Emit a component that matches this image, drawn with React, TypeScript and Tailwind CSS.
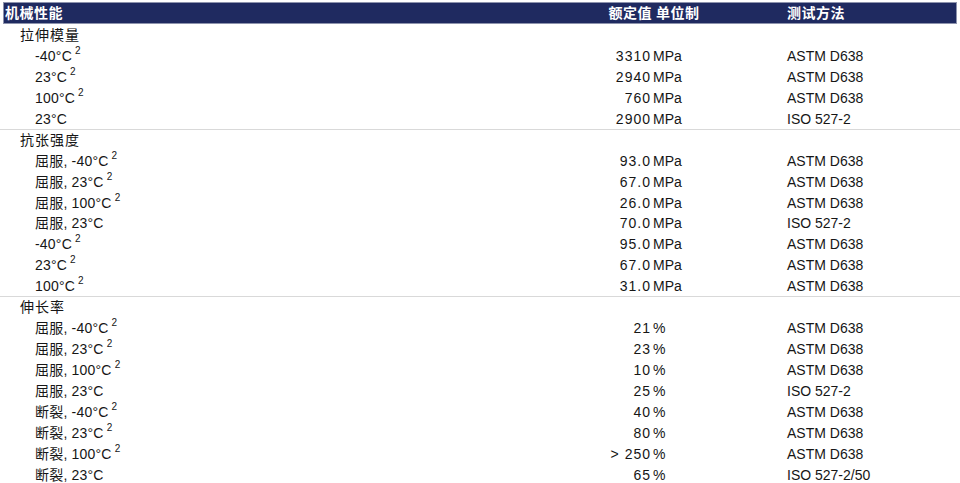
import React from "react";

type Row = { label: string; sup?: boolean; num: string; unit: string; method: string };
type Section = { title: string; rows: Row[]; h: string };

const sections: Section[] = [
  {
    title: "拉伸模量",
    h: "h-[21px]",
    rows: [
      { label: "-40°C", sup: true, num: "3310", unit: "MPa", method: "ASTM D638" },
      { label: "23°C", sup: true, num: "2940", unit: "MPa", method: "ASTM D638" },
      { label: "100°C", sup: true, num: "760", unit: "MPa", method: "ASTM D638" },
      { label: "23°C", num: "2900", unit: "MPa", method: "ISO 527-2" },
    ],
  },
  {
    title: "抗张强度",
    h: "h-[20.75px]",
    rows: [
      { label: "屈服, -40°C", sup: true, num: "93.0", unit: "MPa", method: "ASTM D638" },
      { label: "屈服, 23°C", sup: true, num: "67.0", unit: "MPa", method: "ASTM D638" },
      { label: "屈服, 100°C", sup: true, num: "26.0", unit: "MPa", method: "ASTM D638" },
      { label: "屈服, 23°C", num: "70.0", unit: "MPa", method: "ISO 527-2" },
      { label: "-40°C", sup: true, num: "95.0", unit: "MPa", method: "ASTM D638" },
      { label: "23°C", sup: true, num: "67.0", unit: "MPa", method: "ASTM D638" },
      { label: "100°C", sup: true, num: "31.0", unit: "MPa", method: "ASTM D638" },
    ],
  },
  {
    title: "伸长率",
    h: "h-[20.9px]",
    rows: [
      { label: "屈服, -40°C", sup: true, num: "21", unit: "%", method: "ASTM D638" },
      { label: "屈服, 23°C", sup: true, num: "23", unit: "%", method: "ASTM D638" },
      { label: "屈服, 100°C", sup: true, num: "10", unit: "%", method: "ASTM D638" },
      { label: "屈服, 23°C", num: "25", unit: "%", method: "ISO 527-2" },
      { label: "断裂, -40°C", sup: true, num: "40", unit: "%", method: "ASTM D638" },
      { label: "断裂, 23°C", sup: true, num: "80", unit: "%", method: "ASTM D638" },
      { label: "断裂, 100°C", sup: true, num: "> 250", unit: "%", method: "ASTM D638" },
      { label: "断裂, 23°C", num: "65", unit: "%", method: "ISO 527-2/50" },
    ],
  },
];

export default function App() {
  return (
    <div
      className="w-[960px] h-[483px] overflow-hidden bg-white text-[14px] text-[#161616] leading-none pt-[2px]"
      style={{ fontFamily: '"Liberation Sans", Arial, "Noto Sans CJK SC", sans-serif' }}
    >
      {/* header bar */}
      <div className="ml-[3px] w-[954px] h-[22px] border border-[#8d93ad] bg-[#1f2a60] flex items-center text-white font-bold">
        <div className="w-[556px] pl-[1px] tracking-[0.5px]">机械性能</div>
        <div className="w-[92px] text-right tracking-[0.5px]">额定值</div>
        <div className="w-[135px] pl-[4px] tracking-[0.5px]">单位制</div>
        <div className="tracking-[0.5px]">测试方法</div>
      </div>
      {sections.map((s, si) => (
        <div key={si} className={si < sections.length - 1 ? "border-b border-[#d9d9d9]" : ""}>
          <div className={`${s.h} flex items-center pl-[20px] tracking-[1px]`}>{s.title}</div>
          {s.rows.map((r, ri) => (
            <div key={ri} className={`${s.h} flex items-center`}>
              <div className="w-[560px] pl-[35px] flex items-start">
                <span className="tracking-[0.2px]">{r.label}</span>
                {r.sup && <span className="text-[10px] ml-[3px] -mt-[3px]">2</span>}
              </div>
              <div className="w-[91px] text-right tracking-[1px]">{r.num}</div>
              <div className="w-[136px] pl-[2px]">{r.unit}</div>
              <div>{r.method}</div>
            </div>
          ))}
        </div>
      ))}
    </div>
  );
}
